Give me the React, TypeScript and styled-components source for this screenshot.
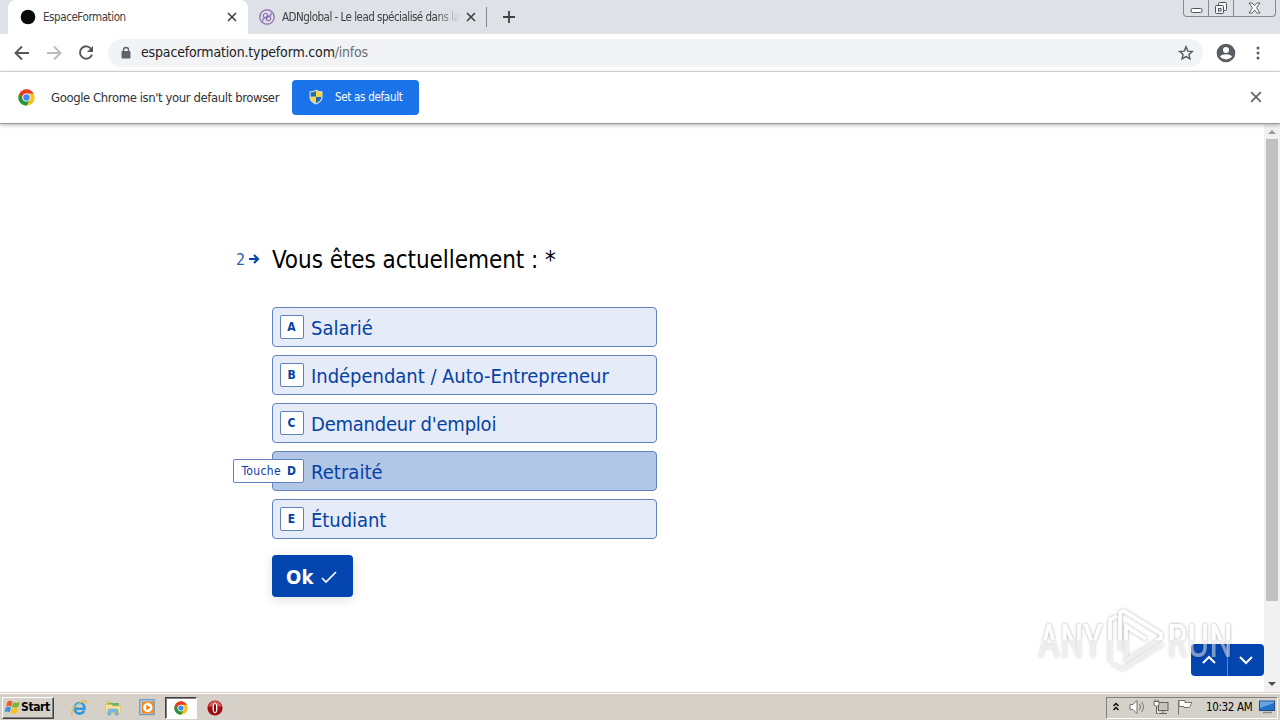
import React from 'react';
import styled, { createGlobalStyle } from 'styled-components';

const GlobalStyle = createGlobalStyle`
  * { box-sizing: border-box; }
  body {
    margin: 0;
    overflow: hidden;
    background: #fff;
    font-family: 'DejaVu Sans Condensed', 'DejaVu Sans', sans-serif;
    font-stretch: condensed;
  }
  svg { display: block; flex-shrink: 0; }
`;

const Screen = styled.div`
  position: relative;
  display: flex;
  flex-direction: column;
  width: 1280px;
  height: 720px;
  overflow: hidden;
`;

const Label = styled.span<{ $size: number; $spacing?: number; $color?: string; $bold?: boolean }>`
  font-size: ${({ $size }) => $size}px;
  letter-spacing: ${({ $spacing = 0 }) => $spacing}px;
  color: ${({ $color = 'inherit' }) => $color};
  font-weight: ${({ $bold }) => ($bold ? 700 : 400)};
  white-space: nowrap;
`;

/* ---------- tab strip ---------- */

const TabStrip = styled.div`
  display: flex;
  height: 34px;
  padding-left: 8px;
  background: #dee1e6;
`;

const Tab = styled.div<{ $active?: boolean }>`
  display: flex;
  align-items: center;
  width: ${({ $active }) => ($active ? 240 : 239)}px;
  height: 34px;
  padding: 0 11px 0 ${({ $active }) => ($active ? 12 : 11)}px;
  border-radius: 8px 8px 0 0;
  background: ${({ $active }) => ($active ? '#fff' : 'transparent')};
  color: #3c4043;
`;

const TabTitle = styled.div<{ $fade?: boolean }>`
  flex: 1;
  display: flex;
  min-width: 0;
  margin: 0 6px 0 7px;
  mask-image: ${({ $fade }) => ($fade ? 'linear-gradient(90deg, #000 86%, transparent 100%)' : 'none')};
`;

const TabDivider = styled.div`
  width: 1px;
  height: 20px;
  margin: 7px 16px 0 -1px;
  background: #80868b;
`;

const NewTab = styled.div`
  padding-top: 11px;
`;

const WindowButtons = styled.div`
  display: flex;
  height: 17px;
  margin: 0 4px 0 auto;
  border: 1px solid #858a92;
  border-top: 0;
  border-radius: 0 0 4px 4px;
`;

const WindowButton = styled.div<{ $width: number }>`
  display: flex;
  align-items: center;
  justify-content: center;
  width: ${({ $width }) => $width}px;
  & + & { border-left: 1px solid #858a92; }
`;

/* ---------- toolbar ---------- */

const Toolbar = styled.div`
  display: flex;
  align-items: center;
  height: 38px;
  padding: 0 14px;
  background: #fff;
  border-bottom: 1px solid #dadce0;
`;

const NavIcons = styled.div`
  display: flex;
  gap: 16px;
  width: 94px;
`;

const AddressBar = styled.div`
  display: flex;
  align-items: center;
  width: 1095px;
  height: 28px;
  padding: 0 9px 0 12px;
  border-radius: 14px;
  background: #f1f3f4;
`;

const Url = styled.div`
  flex: 1;
  display: flex;
  margin-left: 9px;
  padding-bottom: 2px;
`;

const ToolbarEnd = styled.div`
  display: flex;
  align-items: center;
  gap: 18px;
  margin-left: 11px;
`;

/* ---------- info bar ---------- */

const InfoBar = styled.div`
  position: relative;
  display: flex;
  align-items: center;
  height: 52px;
  padding: 0 18px 1px;
  border-bottom: 1px solid #98999b;
  background: #fff;
  box-shadow: 0 1px 4px rgba(0, 0, 0, 0.3);
`;

const InfoText = styled.div`
  width: 241px;
  margin-left: 16px;
  padding-bottom: 2px;
`;

const DefaultButton = styled.div`
  display: flex;
  align-items: center;
  gap: 12px;
  width: 127px;
  height: 35px;
  padding-left: 17px;
  border-radius: 4px;
  background: #1a73e8;
  color: #fff;
`;

const CloseInfo = styled.div`
  margin-left: auto;
`;

/* ---------- form ---------- */

const Page = styled.div`
  display: flex;
  justify-content: space-between;
  height: 568px;
`;

const Form = styled.div`
  display: flex;
  flex-direction: column;
  width: 425px;
  margin: 117px 0 0 232px;
`;

const Question = styled.div`
  display: flex;
  align-items: center;
  height: 36px;
  margin-bottom: 30px;
`;

const QuestionNumber = styled.div`
  display: flex;
  align-items: center;
  gap: 3px;
  width: 40px;
  padding-left: 4px;
  color: #2a5fb8;
`;

const QuestionTitle = styled.div`
  padding-top: 2px;
`;

const Choices = styled.div`
  display: flex;
  flex-direction: column;
  gap: 8px;
  margin-left: 40px;
`;

const Choice = styled.div<{ $hovered?: boolean }>`
  display: flex;
  align-items: center;
  height: 40px;
  padding-left: 7px;
  border: 1px solid #6183bd;
  border-radius: 4px;
  background: ${({ $hovered }) => ($hovered ? '#b2c6e5' : '#e5ebf7')};
  color: #0542a5;
`;

const ChoiceText = styled.div`
  padding-top: 2px;
`;

const Key = styled.div<{ $hovered?: boolean }>`
  display: flex;
  align-items: center;
  justify-content: flex-end;
  gap: 6px;
  width: ${({ $hovered }) => ($hovered ? 71 : 24)}px;
  height: 24px;
  margin: 0 7px 0 ${({ $hovered }) => ($hovered ? -47 : 0)}px;
  border: 1px solid #6183bd;
  border-radius: 2px;
  background: #fff;
`;

const KeyLetter = styled.span`
  width: 9px;
  margin-right: 7px;
  font-size: 12px;
  font-weight: 700;
  line-height: 22px;
  text-align: center;
`;

const OkButton = styled.div`
  display: flex;
  align-items: center;
  gap: 7px;
  width: 81px;
  height: 42px;
  margin: 16px 0 0 40px;
  padding: 2px 0 0 14px;
  border-radius: 4px;
  background: #0445af;
  color: #fff;
  box-shadow: 0 3px 12px rgba(0, 0, 0, 0.12);
`;

const PageEnd = styled.div`
  display: flex;
  align-items: flex-end;
`;

const Pager = styled.div`
  display: flex;
  margin-bottom: 16px;
`;

const PagerButton = styled.div`
  display: flex;
  align-items: center;
  justify-content: center;
  width: 36px;
  height: 32px;
  background: #0445af;
  &:first-child { border-radius: 4px 0 0 4px; }
  &:last-child {
    width: 37px;
    border-left: 1px solid #5c86cb;
    border-radius: 0 4px 4px 0;
  }
`;

const Scrollbar = styled.div`
  display: flex;
  flex-direction: column;
  align-items: center;
  width: 16px;
  height: 568px;
  padding: 6px 0;
  background: #f1f1f1;
`;

const Thumb = styled.div`
  width: 12px;
  height: 462px;
  margin: 5px 0 auto;
  background: #c1c1c1;
`;

/* ---------- taskbar ---------- */

const Taskbar = styled.div`
  display: flex;
  align-items: center;
  height: 28px;
  padding: 2px 2px 0;
  background: #d5d0c8;
  border-top: 1px solid #d5d0c8;
  box-shadow: inset 0 1px 0 #fff;
`;

const StartButton = styled.div`
  display: flex;
  align-items: center;
  width: 52px;
  height: 22px;
  padding: 0 0 1px 1px;
  border: 1px solid;
  border-color: #fff #404040 #404040 #fff;
  box-shadow: inset -1px -1px 0 #808080;
  color: #000;
`;

const QuickLaunch = styled.div`
  display: flex;
  align-items: center;
  margin-left: 8px;
`;

const LaunchItem = styled.div<{ $open?: boolean }>`
  display: flex;
  align-items: center;
  justify-content: center;
  width: ${({ $open }) => ($open ? 32 : 34)}px;
  height: 22px;
  margin: 0 ${({ $open }) => ($open ? 1 : 0)}px;
  border: 1px solid transparent;
  ${({ $open }) => $open && 'border-color: #404040 #fff #fff #404040; background: #fff; box-shadow: inset 1px 1px 0 #808080;'}
`;

const Tray = styled.div`
  display: flex;
  align-items: center;
  width: 172px;
  height: 22px;
  margin-left: auto;
  padding: 0 0 1px 6px;
  border: 1px solid;
  border-color: #808080 #fff #fff #808080;
`;

const TrayIcon = styled.div<{ $gap: number }>`
  margin-right: ${({ $gap }) => $gap}px;
`;

const DesktopIcon = styled.svg`
  margin-left: 7px;
`;

const Watermark = styled.svg`
  position: absolute;
  left: 1026px;
  top: 600px;
`;

/* ---------- icons ---------- */

const Chrome = ({ size = 18 }: { size?: number }) => (
  <svg width={size} height={size} viewBox="0 0 48 48">
    <circle cx="24" cy="24" r="23" fill="#fbc116" />
    <path d="M4.1 12.5A23 23 0 0 1 43.9 12.5H24A11.5 11.5 0 0 0 14 29.8Z" fill="#e33b2e" />
    <path d="M4.1 12.5A23 23 0 0 0 24 47L34 29.8A11.5 11.5 0 0 1 14 29.8Z" fill="#229342" />
    <circle cx="24" cy="24" r="11.5" fill="#fff" />
    <circle cx="24" cy="24" r="9" fill="#4285f4" />
  </svg>
);

const Cross = ({ size, color, stroke = 1.6 }: { size: number; color: string; stroke?: number }) => (
  <svg width={size} height={size} viewBox="0 0 10 10" stroke={color} strokeWidth={stroke}>
    <path d="M1 1L9 9M9 1L1 9" />
  </svg>
);

const Shield = () => (
  <svg width="14" height="16" viewBox="0 0 14 16">
    <path d="M7 .5C9 2 11 2.3 13.5 2.3V8c0 4-3 6-6.5 7.5C3.5 14 .5 12 .5 8V2.3C3 2.3 5 2 7 .5Z" fill="#d5dcdc" />
    <path d="M7 2v5.8H1.6V3.3C4 3.3 5.5 3 7 2ZM7 7.8h5.4c0 3.2-2.3 5-5.4 6.4Z" fill="#1f6cb5" />
    <path d="M7 2v5.8h5.4V3.3C10 3.3 8.5 3 7 2ZM7 7.8H1.6c0 3.2 2.3 5 5.4 6.4Z" fill="#fbd437" />
  </svg>
);

const IeIcon = () => (
  <svg width="18" height="18" viewBox="0 0 18 18" fill="none">
    <path d="M4.5 9.8H14.5C14.5 5.8 12.5 4 9.6 4S4.6 6.3 4.6 9.3s2 5.3 5 5.3c2.2 0 3.7-1 4.5-2.8" stroke="#2d9be0" strokeWidth="2.6" />
    <path d="M3 16C-.5 15.5 3 8.5 8 5S17.5.5 16.3 4.5" stroke="#eab83a" strokeWidth="1.2" />
    <path d="M5 8C6 5.5 10 4.5 12.5 6" stroke="#8bd2f5" strokeWidth="1" />
  </svg>
);

const FolderIcon = () => (
  <svg width="18" height="18" viewBox="0 0 18 18">
    <path d="M2 2.5h5l1 1.5h7v9H2Z" fill="#e9c866" />
    <path d="M4 4h11v5H4Z" fill="#6cb56c" />
    <path d="M1.5 5.5h6L9 7h7.5v7h-15Z" fill="#f7e49b" stroke="#d9b95c" strokeWidth=".6" />
    <path d="M4 16v-4.5q0-1.5 1.5-1.5h7q1.5 0 1.5 1.5V16h-2.5v-3h-5v3Z" fill="#7ebde8" stroke="#4d91c3" strokeWidth=".5" />
  </svg>
);

const PlayerIcon = () => (
  <svg width="17" height="17" viewBox="0 0 17 17">
    <rect x=".7" y=".7" width="14.5" height="15" fill="#a8cdf0" stroke="#5f8fc2" />
    <rect x="3" y="2.5" width="12" height="12" rx="1" fill="#f58a1d" />
    <circle cx="8.8" cy="8.5" r="4.7" fill="#fff" />
    <path d="M7.3 5.8v5.4L11.6 8.5Z" fill="#ee7d13" />
  </svg>
);

const OperaIcon = () => (
  <svg width="16" height="16" viewBox="0 0 16 16">
    <circle cx="8" cy="8" r="7.6" fill="#a50d14" />
    <path d="M1.5 7C2 3 5 1 8 1s6 2 6.5 6C12 5.5 4 5.5 1.5 7Z" fill="#d9595c" />
    <ellipse cx="8" cy="8" rx="2.5" ry="5.3" fill="#fff" />
    <ellipse cx="8" cy="8" rx="1.1" ry="4.3" fill="#7d090e" />
  </svg>
);

const WindowsFlag = () => (
  <svg width="17" height="17" viewBox="0 0 16 16">
    <path d="M3.3 2.5Q5.5.8 8 2.6L6.8 7.2Q4.5 5.7 2 7Z" fill="#ef5b24" />
    <path d="M8.7 3Q11.5 4.5 14.8 2.5L13.5 7.3Q10.5 9 7.5 7.6Z" fill="#78b829" />
    <path d="M1.8 7.8Q4.3 6.5 6.6 8L5.4 12.6Q3 11.2.5 12.4Z" fill="#3c91dd" />
    <path d="M7.3 8.4Q10.3 9.9 13.3 8.1L12 12.9Q9.2 14.6 6.1 13Z" fill="#fbc21c" />
  </svg>
);

const choices = [
  { key: 'A', text: 'Salarié', spacing: 0 },
  { key: 'B', text: 'Indépendant / Auto-Entrepreneur', spacing: -0.03 },
  { key: 'C', text: "Demandeur d'emploi", spacing: -0.23 },
  { key: 'D', text: 'Retraité', spacing: 0.05, hovered: true },
  { key: 'E', text: 'Étudiant', spacing: -0.05 },
];

const App: React.FC = () => (
  <Screen>
    <GlobalStyle />

    <TabStrip>
      <Tab $active>
        <svg width="16" height="16"><circle cx="8" cy="8" r="7.3" fill="#0b0b0b" /></svg>
        <TabTitle><Label $size={11.5} $spacing={-0.42}>EspaceFormation</Label></TabTitle>
        <Cross size={10} color="#3c4043" />
      </Tab>
      <Tab>
        <svg width="16" height="16" viewBox="0 0 16 16" fill="none" stroke="#8a64b0">
          <circle cx="8" cy="8" r="7.2" strokeWidth="1.2" />
          <path d="M4 12.5C2 8 10 9 8.5 5.5 7.5 3.2 4 4.5 4.2 7c.2 2 3.3 2.5 3.8 1M12 3.5C14 8 6 7 7.5 10.5c1 2.3 4.5 1 4.3-1.5-.2-2-3.3-2.5-3.8-1" strokeWidth="1.1" />
        </svg>
        <TabTitle $fade><Label $size={11.5} $spacing={-0.51}>ADNglobal - Le lead spécialisé dans la</Label></TabTitle>
        <Cross size={10} color="#3c4043" />
      </Tab>
      <TabDivider />
      <NewTab>
        <svg width="12" height="12" stroke="#3c4043" strokeWidth="1.8"><path d="M6 0V12M0 6H12" /></svg>
      </NewTab>
      <WindowButtons>
        <WindowButton $width={24}>
          <svg width="13" height="17"><rect x="1" y="8.5" width="11" height="4" rx="1.5" fill="#fff" stroke="#4d525a" /></svg>
        </WindowButton>
        <WindowButton $width={25}>
          <svg width="14" height="15" fill="#f4f5f7" stroke="#4d525a">
            <rect x="4.5" y="1.5" width="8" height="8" rx="1" />
            <rect x="1.5" y="4.5" width="8" height="8" rx="1" />
            <rect x="4.5" y="7.5" width="2.5" height="2.5" />
          </svg>
        </WindowButton>
        <WindowButton $width={42}>
          <svg width="13" height="12" viewBox="0 0 13 12" fill="#fff" stroke="#4d525a" strokeWidth=".9">
            <path d="M1 1H4.2L6.5 3.7 8.8 1H12L8.5 5.8 12 11H8.8L6.5 8 4.2 11H1L4.5 5.8Z" />
          </svg>
        </WindowButton>
      </WindowButtons>
    </TabStrip>

    <Toolbar>
      <NavIcons>
        <svg width="16" height="16" fill="none" stroke="#55595e" strokeWidth="1.9"><path d="M15 8H2M8 1.5L1.5 8 8 14.5" /></svg>
        <svg width="16" height="16" fill="none" stroke="#b9bbbe" strokeWidth="1.9"><path d="M1 8H14M8 1.5L14.5 8 8 14.5" /></svg>
        <svg width="16" height="16" fill="none" stroke="#55595e" strokeWidth="1.9">
          <path d="M13.3 4A6.2 6.2 0 1 0 14 9.7" />
          <path d="M15 1V7H9Z" fill="#55595e" stroke="none" />
        </svg>
      </NavIcons>
      <AddressBar>
        <svg width="12" height="14" viewBox="0 0 12 14">
          <path d="M3.5 6V4a2.5 2.5 0 0 1 5 0V6" fill="none" stroke="#5f6368" strokeWidth="1.4" />
          <rect x="1.5" y="5" width="9" height="7.5" rx="1" fill="#5f6368" />
        </svg>
        <Url>
          <Label $size={14} $spacing={-0.16} $color="#202124">espaceformation.typeform.com</Label>
          <Label $size={14} $spacing={-0.25} $color="#6b6f74">/infos</Label>
        </Url>
        <svg width="16" height="16" viewBox="0 0 16 16" fill="none" stroke="#55595e" strokeWidth="1.4">
          <path d="M8 1.9L9.8 6.1 14.3 6.5 10.9 9.5 11.9 13.9 8 11.6 4.1 13.9 5.1 9.5 1.7 6.5 6.2 6.1Z" />
        </svg>
      </AddressBar>
      <ToolbarEnd>
        <svg width="24" height="20" viewBox="0 0 24 20">
          <circle cx="12" cy="10" r="9.3" fill="#5a5e63" />
          <circle cx="12" cy="7" r="3" fill="#fff" />
          <path d="M6 13.6C8 10.5 16 10.5 18 13.6 15.5 17.3 8.5 17.3 6 13.6Z" fill="#fff" />
        </svg>
        <svg width="4" height="14" fill="#5a5e63"><circle cx="2" cy="2" r="1.5" /><circle cx="2" cy="7" r="1.5" /><circle cx="2" cy="12" r="1.5" /></svg>
      </ToolbarEnd>
    </Toolbar>

    <InfoBar>
      <Chrome size={17} />
      <InfoText><Label $size={13} $spacing={-0.41} $color="#303337">Google Chrome isn't your default browser</Label></InfoText>
      <DefaultButton>
        <Shield />
        <Label $size={11.5} $spacing={-0.3}>Set as default</Label>
      </DefaultButton>
      <CloseInfo><Cross size={12} color="#5f6368" stroke={1.4} /></CloseInfo>
    </InfoBar>

    <Page>
      <Form>
        <Question>
          <QuestionNumber>
            <Label $size={16}>2</Label>
            <svg width="12" height="12" fill="none" stroke="#0445af" strokeWidth="2.2"><path d="M1 6H10M6 2L10 6 6 10" /></svg>
          </QuestionNumber>
          <QuestionTitle><Label $size={24} $spacing={-0.05} $color="#000">Vous êtes actuellement : *</Label></QuestionTitle>
        </Question>
        <Choices>
          {choices.map(({ key, text, spacing, hovered }) => (
            <Choice key={key} $hovered={hovered}>
              <Key $hovered={hovered}>
                {hovered && <Label $size={12} $spacing={0.35}>Touche</Label>}
                <KeyLetter>{key}</KeyLetter>
              </Key>
              <ChoiceText><Label $size={20} $spacing={spacing}>{text}</Label></ChoiceText>
            </Choice>
          ))}
        </Choices>
        <OkButton>
          <Label $size={20} $spacing={0.2} $bold>Ok</Label>
          <svg width="16" height="14" fill="none" stroke="#fff" strokeWidth="1.7"><path d="M1 8L5 12 15 2" /></svg>
        </OkButton>
      </Form>
      <PageEnd>
        <Pager>
          <PagerButton>
            <svg width="14" height="10" fill="none" stroke="#fff" strokeWidth="2"><path d="M1 8L7 2 13 8" /></svg>
          </PagerButton>
          <PagerButton>
            <svg width="14" height="10" fill="none" stroke="#fff" strokeWidth="2"><path d="M1 2L7 8 13 2" /></svg>
          </PagerButton>
        </Pager>
        <Scrollbar>
          <svg width="8" height="4"><path d="M0 4L4 0 8 4Z" fill="#9a9a9a" /></svg>
          <Thumb />
          <svg width="8" height="4"><path d="M0 0L4 4 8 0Z" fill="#505050" /></svg>
        </Scrollbar>
      </PageEnd>
    </Page>

    <Taskbar>
      <StartButton>
        <WindowsFlag />
        <Label $size={12} $spacing={-0.4} $bold>Start</Label>
      </StartButton>
      <QuickLaunch>
        <LaunchItem><IeIcon /></LaunchItem>
        <LaunchItem><FolderIcon /></LaunchItem>
        <LaunchItem><PlayerIcon /></LaunchItem>
        <LaunchItem $open><Chrome size={14} /></LaunchItem>
        <LaunchItem><OperaIcon /></LaunchItem>
      </QuickLaunch>
      <Tray>
        <TrayIcon $gap={10}>
          <svg width="6" height="10" fill="none" stroke="#000" strokeWidth="1.3"><path d="M.5 4L3 1.5 5.5 4M.5 8L3 5.5 5.5 8" /></svg>
        </TrayIcon>
        <TrayIcon $gap={7}>
          <svg width="17" height="16" fill="#fff" stroke="#77746f">
            <path d="M1 5.5H4L8 1.5V14.5L4 10.5H1Z" />
            <path d="M10.5 5Q12.5 8 10.5 11M12.5 3Q16.5 8 12.5 13" fill="none" />
          </svg>
        </TrayIcon>
        <TrayIcon $gap={8}>
          <svg width="16" height="16" fill="#fff" stroke="#66635e">
            <rect x="5.5" y="3.5" width="9.5" height="8" fill="#c6c4c0" />
            <path d="M6 14.5H14M10 12V14" />
            <path d="M1 2.5H6V6L3.5 7.5 1 6ZM2 .5V2.5M5 .5V2.5M3.5 7.5V14.5H5" />
          </svg>
        </TrayIcon>
        <TrayIcon $gap={12}>
          <svg width="17" height="16" fill="#fff" stroke="#77746f">
            <path d="M1.5 1V15.5M2 1.5H8V3.5H15L12.5 8.5H7V7.5H2Z" />
          </svg>
        </TrayIcon>
        <Label $size={11.5} $spacing={-0.35} $color="#000">10:32 AM</Label>
        <DesktopIcon width="17" height="14" viewBox="0 0 17 14">
          <rect x=".5" y="1" width="15" height="9.5" fill="#2372c9" stroke="#1e4d8c" />
          <path d="M1 1.5H15V3L1 8Z" fill="#65a5e5" />
          <path d="M4 12.5H13" stroke="#85878a" strokeWidth="1.5" />
        </DesktopIcon>
      </Tray>
    </Taskbar>

    <Watermark width="220" height="80" viewBox="0 0 220 80">
      <defs>
        <filter id="soft" x="-10%" y="-20%" width="120%" height="140%">
          <feDropShadow dx="0" dy="0" stdDeviation="1.8" floodColor="#000" floodOpacity="0.5" />
        </filter>
        <linearGradient id="fade" gradientUnits="userSpaceOnUse" x1="0" y1="0" x2="0" y2="80">
          <stop offset="0.5" stopColor="#fff" />
          <stop offset="0.5" stopColor="#ececec" stopOpacity="0.65" />
        </linearGradient>
      </defs>
      <g filter="url(#soft)" opacity="0.75" fontFamily="Roboto, sans-serif" fontSize="47" fontWeight="400" fill="url(#fade)">
        <text x="12" y="57" textLength="65" lengthAdjust="spacingAndGlyphs">ANY</text>
        <text x="141" y="57" textLength="66" lengthAdjust="spacingAndGlyphs">RUN</text>
        <path d="M84 62V20L91 16M94 50V13L98 11 135 34V38L100 60V26L120 39M86 64L97 69 137 44" fill="none" stroke="url(#fade)" strokeWidth="3.5" />
      </g>
    </Watermark>
  </Screen>
);

export default App;
